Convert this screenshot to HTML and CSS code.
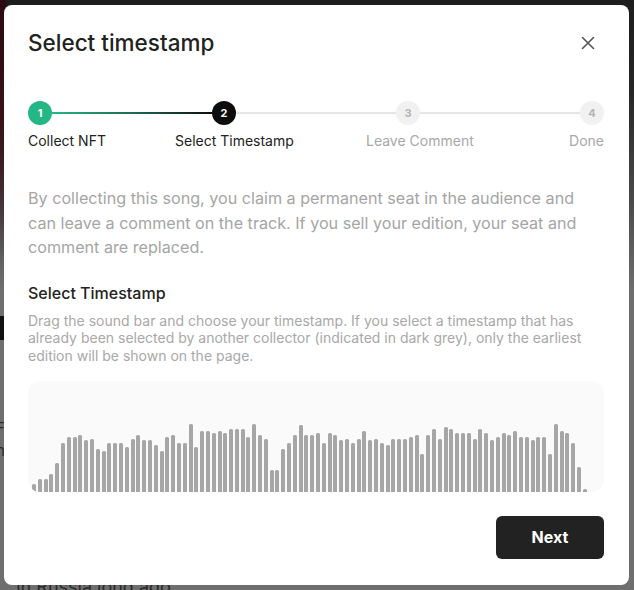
FILE: index.html
```html
<!DOCTYPE html>
<html lang="en">
<head>
<meta charset="utf-8">
<title>Select timestamp</title>
<link rel="stylesheet" href="styles.css">
</head>
<body>
<div class="backdrop">
  <div class="bg-block"></div>
  <div class="bg-text bg-f">F</div>
  <div class="bg-text bg-n">n</div>
  <div class="bg-bottom">, in Russia long ago</div>
</div>
<div class="modal" role="dialog" aria-labelledby="modal-title">
  <div class="modal-header">
    <h1 id="modal-title" class="modal-title">Select timestamp</h1>
    <button class="close-btn" aria-label="Close">
      <svg width="14" height="14" viewBox="0 0 14 14"><path d="M1.5 1.5 L12.5 12.5 M12.5 1.5 L1.5 12.5" stroke="#555" stroke-width="1.6" stroke-linecap="round" fill="none"/></svg>
    </button>
  </div>

  <div class="stepper">
    <div class="track">
      <span class="dot dot-done">1</span>
      <span class="line line-active"></span>
      <span class="dot dot-current">2</span>
      <span class="line"></span>
      <span class="dot dot-todo">3</span>
      <span class="line"></span>
      <span class="dot dot-todo">4</span>
    </div>
    <div class="labels">
      <span class="label label-on">Collect NFT</span>
      <span class="label label-on">Select Timestamp</span>
      <span class="label">Leave Comment</span>
      <span class="label label-end">Done</span>
    </div>
  </div>

  <p class="intro">By collecting this song, you claim a permanent seat in the audience and can leave a comment on the track. If you sell your edition, your seat and comment are replaced.</p>

  <h2 class="section-title">Select Timestamp</h2>
  <p class="hint">Drag the sound bar and choose your timestamp. If you select a timestamp that has already been selected by another collector (indicated in dark grey), only the earliest edition will be shown on the page.</p>

  <div class="wave">
    <div class="bars">
      <i style="height:8px"></i><i style="height:13px"></i><i style="height:13px"></i><i style="height:18px"></i><i style="height:29px"></i><i style="height:49px"></i><i style="height:55px"></i><i style="height:55px"></i><i style="height:57px"></i><i style="height:52px"></i><i style="height:53px"></i><i style="height:43px"></i><i style="height:41px"></i><i style="height:49px"></i><i style="height:49px"></i><i style="height:49px"></i><i style="height:45px"></i><i style="height:53px"></i><i style="height:57px"></i><i style="height:52px"></i><i style="height:52px"></i><i style="height:47px"></i><i style="height:41px"></i><i style="height:55px"></i><i style="height:57px"></i><i style="height:49px"></i><i style="height:49px"></i><i style="height:68px"></i><i style="height:45px"></i><i style="height:61px"></i><i style="height:61px"></i><i style="height:59px"></i><i style="height:61px"></i><i style="height:59px"></i><i style="height:63px"></i><i style="height:63px"></i><i style="height:63px"></i><i style="height:55px"></i><i style="height:68px"></i><i style="height:57px"></i><i style="height:53px"></i><i style="height:22px"></i><i style="height:22px"></i><i style="height:43px"></i><i style="height:49px"></i><i style="height:57px"></i><i style="height:67px"></i><i style="height:57px"></i><i style="height:57px"></i><i style="height:59px"></i><i style="height:49px"></i><i style="height:59px"></i><i style="height:57px"></i><i style="height:52px"></i><i style="height:53px"></i><i style="height:49px"></i><i style="height:53px"></i><i style="height:61px"></i><i style="height:52px"></i><i style="height:53px"></i><i style="height:49px"></i><i style="height:47px"></i><i style="height:53px"></i><i style="height:53px"></i><i style="height:53px"></i><i style="height:55px"></i><i style="height:57px"></i><i style="height:38px"></i><i style="height:57px"></i><i style="height:63px"></i><i style="height:53px"></i><i style="height:65px"></i><i style="height:63px"></i><i style="height:59px"></i><i style="height:59px"></i><i style="height:59px"></i><i style="height:53px"></i><i style="height:63px"></i><i style="height:59px"></i><i style="height:52px"></i><i style="height:55px"></i><i style="height:59px"></i><i style="height:57px"></i><i style="height:61px"></i><i style="height:55px"></i><i style="height:55px"></i><i style="height:52px"></i><i style="height:55px"></i><i style="height:55px"></i><i style="height:38px"></i><i style="height:68px"></i><i style="height:61px"></i><i style="height:59px"></i><i style="height:49px"></i><i style="height:25px"></i><i style="height:3px"></i>
    </div>
  </div>

  <div class="footer">
    <button class="next-btn">Next</button>
  </div>
</div>
</body>
</html>
```

FILE: styles.css
```css
* { box-sizing: border-box; }

html, body {
  margin: 0;
  padding: 0;
  width: 634px;
  height: 590px;
  overflow: hidden;
}

body {
  font-family: Inter, "Noto Sans", "Liberation Sans", sans-serif;
  background: linear-gradient(180deg, #1d1d1d 0px, #262626 90px, #4a4a4a 200px, #6e6e6e 290px, #6e6e6e 100%);
  position: relative;
}

.backdrop {
  position: absolute;
  inset: 0;
  background: linear-gradient(180deg, #2c0b12 0px, #3a1119 120px, rgba(0,0,0,0) 260px) left top / 6px 100% no-repeat;
}

.bg-block {
  position: absolute;
  left: 0;
  top: 316px;
  width: 4px;
  height: 24px;
  background: #111;
}

.bg-text {
  position: absolute;
  left: -4px;
  font-size: 15px;
  color: #2a2a2a;
}
.bg-f { top: 418px; }
.bg-n { top: 441px; }

.bg-bottom {
  position: absolute;
  left: 6px;
  top: 576px;
  font-size: 18px;
  color: #2a2a2a;
}

.modal {
  position: absolute;
  left: 4px;
  top: 5px;
  width: 625px;
  height: 580px;
  background: #fff;
  border-radius: 8px;
  padding: 23px 25px 25px 24px;
  display: flex;
  flex-direction: column;
}

.modal-header {
  display: flex;
  align-items: center;
  justify-content: space-between;
  height: 30px;
}

.modal-title {
  margin: 0;
  font-size: 22.5px;
  line-height: 30px;
  font-weight: 500;
  color: #222;
  letter-spacing: 0;
}

.close-btn {
  border: 0;
  background: none;
  padding: 0;
  width: 14px;
  height: 14px;
  margin-right: 9px;
  display: flex;
}

.stepper {
  margin-top: 43px;
}

.track {
  display: flex;
  align-items: center;
  height: 24px;
}

.dot {
  width: 24px;
  height: 24px;
  border-radius: 50%;
  display: flex;
  align-items: center;
  justify-content: center;
  font-size: 11px;
  font-weight: 700;
  flex: none;
}
.dot-done { background: #25b685; color: #fff; }
.dot-current { background: #0d0d0d; color: #fff; }
.dot-todo { background: #f1f1f1; color: #b4b4b4; }

.line {
  flex: 1;
  height: 2px;
  background: #e6e6e6;
}
.line-active {
  background: linear-gradient(90deg, #25b685 0%, #1f6b55 50%, #0d0d0d 100%);
}

.labels {
  display: grid;
  grid-template-columns: 147px 191px 1fr auto;
  margin-top: 6px;
  font-size: 14px;
  line-height: 20px;
  color: #a8a8a8;
}
.label-on { color: #222; }
.label-end { text-align: right; }

.intro {
  margin: 35px 0 0;
  font-size: 16.15px;
  line-height: 24.5px;
  color: #a5a5a5;
  padding-right: 20px;
}

.section-title {
  margin: 22px 0 0;
  font-size: 16px;
  line-height: 22px;
  font-weight: 500;
  color: #222;
}

.hint {
  margin: 8px 0 0;
  font-size: 14px;
  line-height: 17.5px;
  color: #a8a8a8;
  padding-right: 10px;
}

.wave {
  margin-top: 17px;
  height: 111px;
  background: #fafafa;
  border-radius: 12px;
  overflow: hidden;
  padding: 0 17px 0 4px;
  display: flex;
  align-items: flex-end;
}

.bars {
  display: flex;
  align-items: flex-end;
  gap: 1.8px;
  width: 100%;
}

.bars i {
  display: block;
  width: 4px;
  flex: none;
  background: #a6a6a6;
  border-radius: 1.5px 1.5px 0 0;
}

.footer {
  display: flex;
  justify-content: flex-end;
  margin-top: 24px;
}

.next-btn {
  width: 108px;
  height: 43px;
  border: 0;
  border-radius: 6px;
  background: #222;
  color: #fff;
  font-family: inherit;
  font-size: 16px;
  font-weight: 700;
  padding-bottom: 2px;
}
```
